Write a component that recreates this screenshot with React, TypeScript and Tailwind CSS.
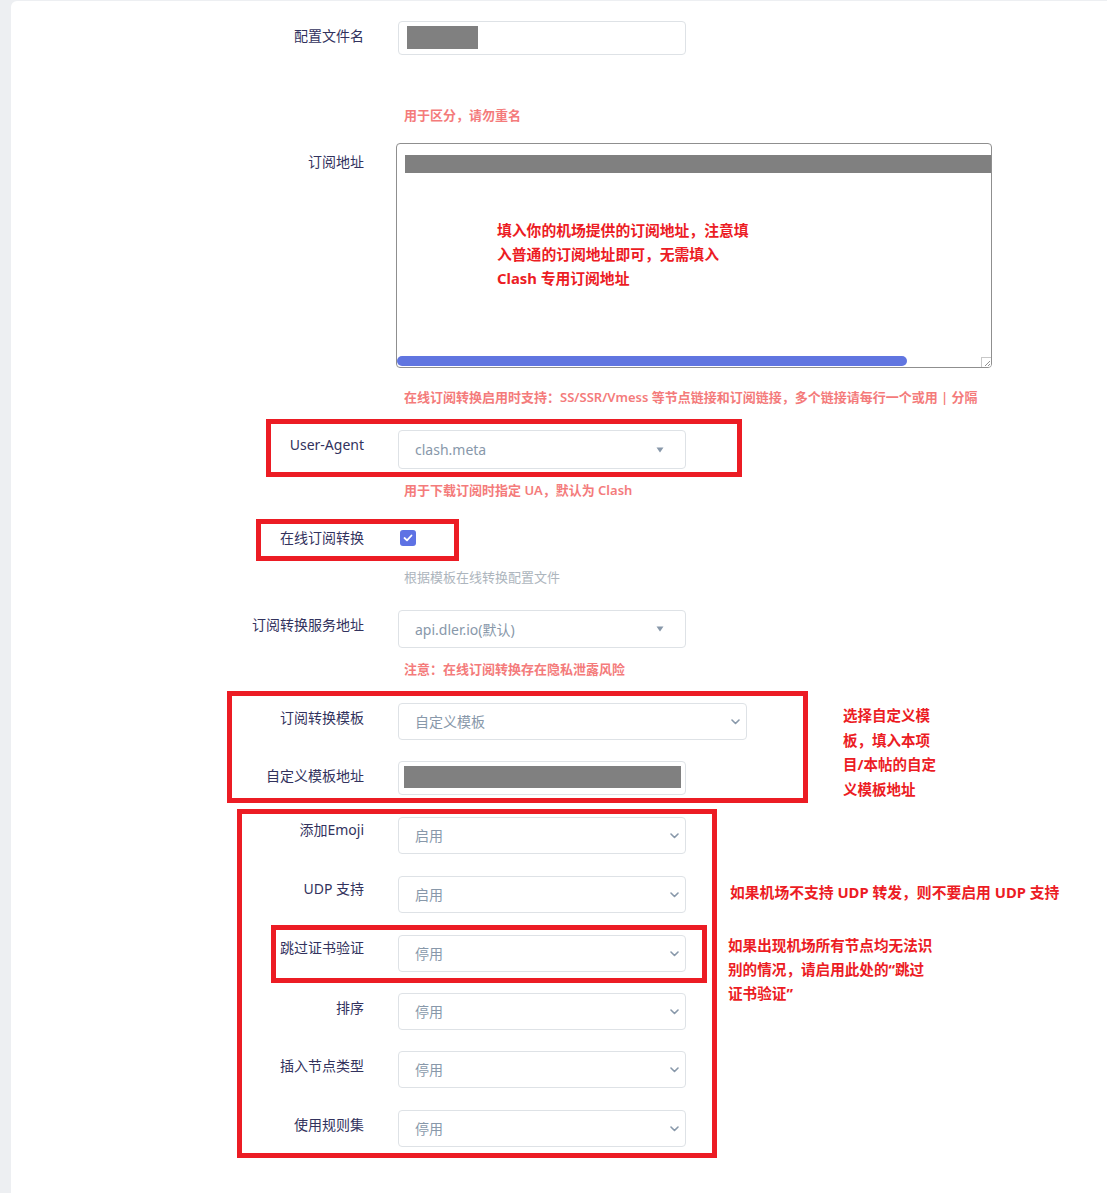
import React from "react";

const FONT = '"Noto Sans", "Noto Sans CJK SC", sans-serif';

function Label({ text, pt = "pt-[5px]" }: { text: string; pt?: string }) {
  return (
    <div className={`w-[353px] shrink-0 text-right text-[14px] leading-[20px] text-[#32325d] ${pt}`}>{text}</div>
  );
}

function Chevron() {
  return (
    <svg width="9" height="6" viewBox="0 0 9 6" className="shrink-0">
      <path d="M1 1 L4.5 4.5 L8 1" fill="none" stroke="#8898aa" strokeWidth="1.6" strokeLinecap="round" strokeLinejoin="round" />
    </svg>
  );
}

function Triangle() {
  return (
    <svg width="8" height="6" viewBox="0 0 8 6" className="shrink-0">
      <path d="M0.5 0.5 L7.5 0.5 L4 5.5 Z" fill="#8898aa" />
    </svg>
  );
}

function ChevSelect({ value, w = "w-[288px]" }: { value: string; w?: string }) {
  return (
    <div className={`${w} h-[37px] border border-[#dee2e6] rounded-[4px] bg-white flex items-center justify-between pl-[16px] pr-[6px] text-[14px] text-[#8898aa]`}>
      <span>{value}</span>
      <Chevron />
    </div>
  );
}

function TriSelect({ value, h = "h-[39px]" }: { value: string; h?: string }) {
  return (
    <div className={`w-[288px] ${h} border border-[#dee2e6] rounded-[4px] bg-white flex items-center justify-between pl-[16px] pr-[21px] text-[14px] text-[#8898aa]`}>
      <span>{value}</span>
      <Triangle />
    </div>
  );
}

function Hint({ text, mt, gray = false }: { text: string; mt: string; gray?: boolean }) {
  return (
    <div
      className={`${mt} ml-[393px] text-[13px] leading-[20px] ${gray ? "text-[#adb5bd] font-normal" : "text-[#f47b7b] font-semibold"}`}
    >
      {text}
    </div>
  );
}

export default function App() {
  return (
    <div className="min-h-screen bg-[#edeff2] pl-[11px] pt-[1px]" style={{ fontFamily: FONT }}>
      <div className="relative bg-white rounded-tl-[6px] min-h-[1192px] pt-[20px] pb-[60px]">
        {/* 配置文件名 */}
        <div className="flex">
          <Label text="配置文件名" />
          <div className="ml-[34px] w-[288px] h-[34px] border border-[#dee2e6] rounded-[4px] bg-white pl-[8px] pt-[4px]">
            <div className="w-[71px] h-[23px] bg-[#808080]" />
          </div>
        </div>
        <Hint text="用于区分，请勿重名" mt="mt-[50px]" />

        {/* 订阅地址 */}
        <div className="flex mt-[18px]">
          <Label text="订阅地址" pt="pt-[9px]" />
          <div className="relative ml-[32px] w-[596px] h-[225px] border border-[#8f8f8f] rounded-[4px] bg-white overflow-hidden">
            <div className="mt-[11px] ml-[8px] h-[18px] bg-[#808080]" />
            <div className="absolute left-0 bottom-[1px] h-[10px] w-[510px] rounded-full bg-[#6075e0]" />
            <div className="absolute right-0 bottom-0 w-[10px] h-[10px] border-l border-t border-[#c8c8c8] bg-white">
              <svg width="9" height="9" viewBox="0 0 9 9">
                <path d="M8 3 L3 8 M8 6 L6 8" stroke="#777" strokeWidth="0.8" />
              </svg>
            </div>
          </div>
        </div>
        <Hint
          text="在线订阅转换启用时支持：SS/SSR/Vmess 等节点链接和订阅链接，多个链接请每行一个或用 | 分隔"
          mt="mt-[19px]"
        />

        {/* User-Agent */}
        <div className="flex mt-[23px]">
          <Label text="User-Agent" />
          <div className="ml-[34px]">
            <TriSelect value="clash.meta" />
          </div>
        </div>
        <Hint text="用于下载订阅时指定 UA，默认为 Clash" mt="mt-[11px]" />

        {/* 在线订阅转换 */}
        <div className="flex mt-[23px] h-[30px] items-center">
          <div className="w-[353px] shrink-0 text-right text-[14px] leading-[20px] text-[#32325d]">在线订阅转换</div>
          <div className="ml-[36px] w-[16px] h-[16px] rounded-[3px] bg-[#5e72e4] flex items-center justify-center">
            <svg width="10" height="8" viewBox="0 0 10 8">
              <path d="M1.5 4 L4 6.3 L8.5 1.5" fill="none" stroke="white" strokeWidth="1.8" strokeLinecap="round" strokeLinejoin="round" />
            </svg>
          </div>
        </div>
        <Hint text="根据模板在线转换配置文件" mt="mt-[14px]" gray />

        {/* 订阅转换服务地址 */}
        <div className="flex mt-[23px]">
          <Label text="订阅转换服务地址" />
          <div className="ml-[34px]">
            <TriSelect value="api.dler.io(默认)" h="h-[38px]" />
          </div>
        </div>
        <Hint text="注意：在线订阅转换存在隐私泄露风险" mt="mt-[11px]" />

        {/* 订阅转换模板 */}
        <div className="flex mt-[24px]">
          <Label text="订阅转换模板" />
          <div className="ml-[34px]">
            <ChevSelect value="自定义模板" w="w-[349px]" />
          </div>
        </div>

        {/* 自定义模板地址 */}
        <div className="flex mt-[21px]">
          <Label text="自定义模板地址" />
          <div className="ml-[34px] w-[288px] h-[34px] border border-[#dee2e6] rounded-[4px] bg-white pl-[5px] pt-[4px]">
            <div className="w-[277px] h-[22px] bg-[#808080]" />
          </div>
        </div>

        {/* selects */}
        <div className="flex mt-[22px]">
          <Label text="添加Emoji" pt="pt-[3px]" />
          <div className="ml-[34px]"><ChevSelect value="启用" /></div>
        </div>
        <div className="flex mt-[22px]">
          <Label text="UDP 支持" pt="pt-[3px]" />
          <div className="ml-[34px]"><ChevSelect value="启用" /></div>
        </div>
        <div className="flex mt-[22px]">
          <Label text="跳过证书验证" pt="pt-[3px]" />
          <div className="ml-[34px]"><ChevSelect value="停用" /></div>
        </div>
        <div className="flex mt-[21px]">
          <Label text="排序" />
          <div className="ml-[34px]"><ChevSelect value="停用" /></div>
        </div>
        <div className="flex mt-[21px]">
          <Label text="插入节点类型" />
          <div className="ml-[34px]"><ChevSelect value="停用" /></div>
        </div>
        <div className="flex mt-[22px]">
          <Label text="使用规则集" />
          <div className="ml-[34px]"><ChevSelect value="停用" /></div>
        </div>

        {/* annotation boxes */}
        <div className="absolute left-[255px] top-[418px] w-[476px] h-[58px] border-[5px] border-[#ec1c24] pointer-events-none" />
        <div className="absolute left-[245px] top-[518px] w-[203px] h-[42px] border-[5px] border-[#ec1c24] pointer-events-none" />
        <div className="absolute left-[216px] top-[690px] w-[581px] h-[112px] border-[5px] border-[#ec1c24] pointer-events-none" />
        <div className="absolute left-[226px] top-[808px] w-[480px] h-[349px] border-[5px] border-[#ec1c24] pointer-events-none" />
        <div className="absolute left-[260px] top-[924px] w-[436px] h-[58px] border-[5px] border-[#ec1c24] pointer-events-none" />

        {/* annotation texts */}
        <div className="absolute left-[486px] top-[217px] text-[14.8px] leading-[24px] font-bold text-[#ec1c24] whitespace-nowrap">
          填入你的机场提供的订阅地址，注意填
          <br />
          入普通的订阅地址即可，无需填入
          <br />
          Clash 专用订阅地址
        </div>
        <div className="absolute left-[832px] top-[702px] text-[14.5px] leading-[24.5px] font-bold text-[#ec1c24] whitespace-nowrap">
          选择自定义模
          <br />
          板，填入本项
          <br />
          目/本帖的自定
          <br />
          义模板地址
        </div>
        <div className="absolute left-[719px] top-[879px] text-[14.8px] leading-[24px] font-bold text-[#ec1c24] whitespace-nowrap">
          如果机场不支持 UDP 转发，则不要启用 UDP 支持
        </div>
        <div className="absolute left-[717px] top-[932px] text-[14.6px] leading-[24px] font-bold text-[#ec1c24] whitespace-nowrap">
          如果出现机场所有节点均无法识
          <br />
          别的情况，请启用此处的“跳过
          <br />
          证书验证”
        </div>
      </div>
    </div>
  );
}
